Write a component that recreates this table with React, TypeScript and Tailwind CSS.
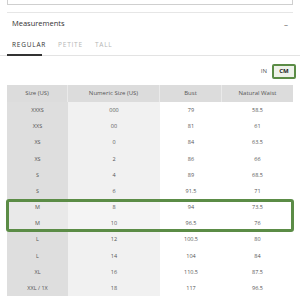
const rows: [string, string, string, string][] = [
  ["XXXS", "000", "79", "58.5"],
  ["XXS", "00", "81", "61"],
  ["XS", "0", "84", "63.5"],
  ["XS", "2", "86", "66"],
  ["S", "4", "89", "68.5"],
  ["S", "6", "91.5", "71"],
  ["M", "8", "94", "73.5"],
  ["M", "10", "96.5", "76"],
  ["L", "12", "100.5", "80"],
  ["L", "14", "104", "84"],
  ["XL", "16", "110.5", "87.5"],
  ["XXL / 1X", "18", "117", "96.5"],
];

export default function App() {
  return (
    <div className="relative w-[300px] h-[300px] overflow-hidden bg-white font-['Open_Sans',sans-serif] text-[#444]">
      {/* cut-off box above */}
      <div className="mx-[7px] h-[5px] border border-t-0 border-[#cfcfcf]" />
      <div className="mx-[7px] mt-[7px] border-t border-[#e6e6e6]" />

      {/* accordion header */}
      <div className="flex items-center justify-between h-[21px] pl-[12px] pr-[12px]">
        <span className="text-[7.5px] text-[#333]">Measurements</span>
        <span className="text-[8px] leading-none text-[#555]">–</span>
      </div>

      {/* tabs */}
      <div className="relative h-[22px] border-b border-[#e3e3e3]">
        <div className="flex items-center h-full pl-[12px] gap-[12px] text-[6.5px] tracking-[0.12em]">
          <span className="text-[#333]">REGULAR</span>
          <span className="text-[#b5b5b5]">PETITE</span>
          <span className="text-[#b5b5b5]">TALL</span>
        </div>
        <div className="absolute left-[7px] bottom-[-1px] w-[35px] h-[2px] bg-[#333]" />
      </div>

      {/* unit toggle */}
      <div className="flex justify-end items-center h-[29px] pr-[4px] pt-[1px]">
        <span className="text-[6px] text-[#555] mr-[5px]">IN</span>
        <span className="flex items-center justify-center w-[24px] h-[15px] border-2 border-[#5b8c46] bg-[#eef2ea] text-[6px] font-bold text-[#222] rounded-[2px]">
          CM
        </span>
      </div>

      {/* table */}
      <div className="relative mx-[7px] w-[286px]">
        <div className="grid grid-cols-[61px_92px_62px_71px] h-[17px] bg-[#dcdcdc] text-[6px] text-[#555]">
          <div className="flex items-center justify-center border-r border-[#eaeaea]">Size (US)</div>
          <div className="flex items-center justify-center border-r border-[#eaeaea]">Numeric Size (US)</div>
          <div className="flex items-center justify-center border-r border-[#eaeaea]">Bust</div>
          <div className="flex items-center justify-center">Natural Waist</div>
        </div>
        {rows.map((r, i) => {
          const hi = i === 6 || i === 7;
          return (
            <div
              key={i}
              className="grid grid-cols-[61px_92px_62px_71px] h-[16.2px] text-[5.5px] text-[#555]"
            >
              <div className={`flex items-center justify-center ${hi ? "bg-[#e9e9e9]" : "bg-[#dedede]"}`}>{r[0]}</div>
              <div className={`flex items-center justify-center ${hi ? "bg-[#f4f4f4]" : "bg-[#f1f1f1]"}`}>{r[1]}</div>
              <div className="flex items-center justify-center bg-white">{r[2]}</div>
              <div className="flex items-center justify-center bg-white">{r[3]}</div>
            </div>
          );
        })}
        {/* highlighted rows */}
        <div className="absolute left-[-1px] top-[113.5px] w-[288px] h-[33px] border-[3px] border-[#5b8c46] rounded-[3px]" />
      </div>
    </div>
  );
}
